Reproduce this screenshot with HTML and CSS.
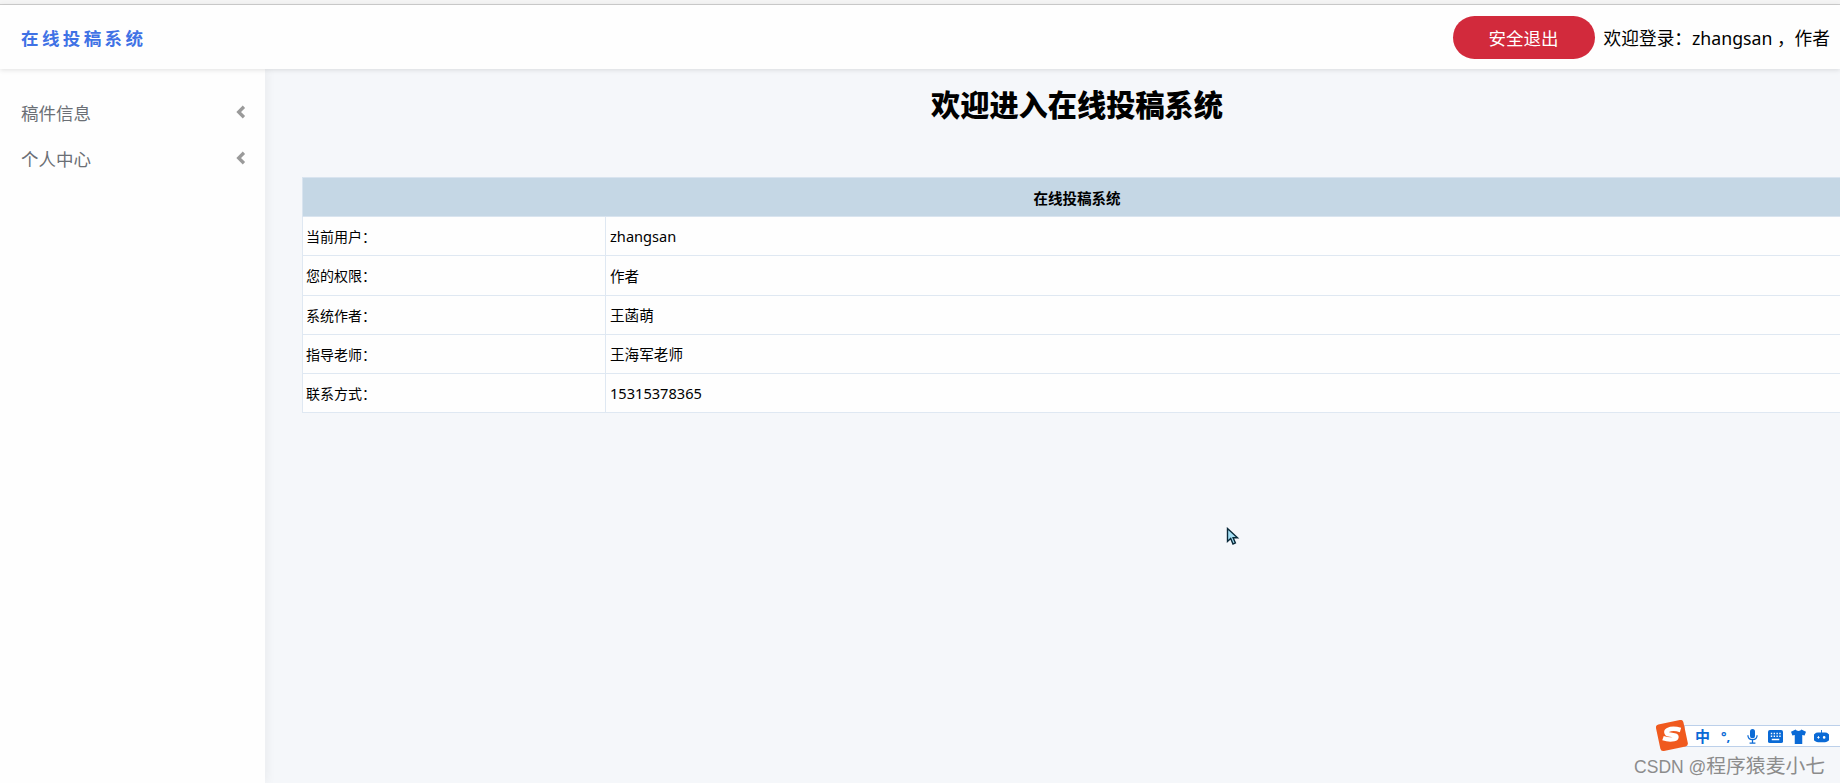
FILE: index.html
```html
<!DOCTYPE html>
<html lang="zh-CN">

<head>
    <meta charset="UTF-8">
    <meta name="viewport" content="width=device-width, initial-scale=1.0">
    <title>在线投稿系统</title>
    <link rel="stylesheet" href="styles.css">
</head>

<body>
    <div class="top-line"></div>
    <header class="topbar">
        <div class="logo">在线投稿系统</div>
        <div class="user-box">
            <button class="btn-logout">安全退出</button>
            <span class="welcome">欢迎登录：zhangsan ，作者</span>
        </div>
    </header>

    <div class="layout">
        <aside class="sidebar">
            <div class="menu-item">
                <span>稿件信息</span>
                <svg class="arrow" viewBox="0 0 10 12"><path d="M7.5 1.5 3 6l4.500 4.500" /></svg>
            </div>
            <div class="menu-item">
                <span>个人中心</span>
                <svg class="arrow" viewBox="0 0 10 12"><path d="M7.5 1.5 3 6l4.500 4.500" /></svg>
            </div>
        </aside>

        <main class="content">
            <h1>欢迎进入在线投稿系统</h1>
            <table class="info-table">
                <colgroup>
                    <col class="col-label">
                    <col>
                </colgroup>
                <tr>
                    <th colspan="2">在线投稿系统</th>
                </tr>
                <tr>
                    <td class="label">当前用户：</td>
                    <td>zhangsan</td>
                </tr>
                <tr>
                    <td class="label">您的权限：</td>
                    <td>作者</td>
                </tr>
                <tr>
                    <td class="label">系统作者：</td>
                    <td>王菡萌</td>
                </tr>
                <tr>
                    <td class="label">指导老师：</td>
                    <td>王海军老师</td>
                </tr>
                <tr>
                    <td class="label">联系方式：</td>
                    <td>15315378365</td>
                </tr>
            </table>
        </main>
    </div>

    <!-- mouse pointer -->
    <svg class="cursor" viewBox="0 0 14 20">
        <path d="M1.500 1.500v13l3.200-3 2.300 5.500 2.400-1-2.300-5.300h4.400z" />
    </svg>

    <!-- input method bar -->
    <div class="ime">
        <svg class="ime-logo" viewBox="0 0 32 32">
            <rect x="2" y="2" width="28" height="27" rx="3" transform="rotate(-12 16 16)" />
            <path d="M24.500 10c-4-1.200-9-1.700-12.500 0-2.500 1.300-2 3.800 1 4.400l5.500 1c2.800.6 2.500 3-.5 3.700-3 .7-7.500.3-11-.9" />
        </svg>
        <div class="ime-bar">
            <span class="ime-zh">中</span>
            <span class="ime-punct">°,</span>
            <svg class="ime-icon" viewBox="0 0 14 18">
                <rect x="4" y="0" width="6" height="11" rx="3" />
                <path class="line" d="M1.500 7.500c0 7 11 7 11 0M7 13v3.500M3.500 17h7" />
            </svg>
            <svg class="ime-icon" viewBox="0 0 16 14">
                <rect x="0" y="0" width="16" height="14" rx="2" />
                <path class="keys" d="M3 3h1.500v1.500H3zM6 3h1.500v1.500H6zM9 3h1.500v1.500H9zM12 3h1.500v1.500H12zM3 6h1.500v1.500H3zM6 6h1.500v1.500H6zM9 6h1.500v1.500H9zM12 6h1.500v1.500H12zM4 9.500h8V11H4z" />
            </svg>
            <svg class="ime-icon" viewBox="0 0 16 16">
                <path d="M5 0.500 0 3l1.500 4L4 6.300V16h8V6.300l2.500.7L16 3 11 .5C10.500 2.500 5.500 2.500 5 .5z" />
            </svg>
            <svg class="ime-icon" viewBox="0 0 17 15">
                <path d="M8 0h1v3h3.500a4.500 4.500 0 0 1 0 11h-8a4.500 4.500 0 0 1 0-11H8z" />
                <path class="keys" d="M3.500 8h3v1h-3zM4.500 7h1v3h-1zM11.500 7a1.500 1.500 0 1 1 0 3 1.500 1.500 0 0 1 0-3z" />
            </svg>
        </div>
    </div>
    <div class="watermark"><span class="wm-latin">CSDN @</span>程序猿麦小七</div>
</body>

</html>
```

FILE: styles.css
```css
* {
    box-sizing: border-box;
}

html,
body {
    height: 100%;
    margin: 0;
    overflow: hidden;
}

body {
    font-family: "Noto Sans", "Noto Sans CJK SC", sans-serif;
    background-color: #f5f7fa;
    color: #000;
}

.top-line {
    height: 5px;
    background-color: #f4f4f4;
    border-bottom: 1px solid #cfcfcf;
}

.topbar {
    position: relative;
    z-index: 2;
    display: flex;
    justify-content: space-between;
    align-items: center;
    height: 64px;
    padding: 0 10px 0 21px;
    background-color: #fefefe;
    box-shadow: 0 1px 5px rgba(0, 0, 0, 0.12);
}

.logo {
    color: #3f72e5;
    font-size: 17.500px;
    font-weight: bold;
    letter-spacing: 3.400px;
}

.user-box {
    display: flex;
    align-items: center;
    gap: 9px;
}

.btn-logout {
    width: 142px;
    height: 43px;
    padding: 0;
    border: none;
    border-radius: 22px;
    background-color: #d22a3c;
    color: #fff;
    font-family: inherit;
    font-size: 17.500px;
}

.welcome {
    font-size: 17.700px;
}

.layout {
    display: flex;
    height: calc(100% - 69px);
}

.sidebar {
    flex: 0 0 265px;
    padding-top: 20px;
    background-color: #fefefe;
    box-shadow: 2px 0 10px rgba(0, 0, 0, 0.05);
}

.menu-item {
    display: flex;
    justify-content: space-between;
    align-items: center;
    height: 46px;
    padding: 0 18px 0 21px;
    color: #6b6f75;
    font-size: 17.500px;
}

.arrow {
    width: 12px;
    height: 14px;
    fill: none;
    stroke: #9a9a9a;
    stroke-width: 2.800;
}

.content {
    flex: 0 0 1624px;
    padding: 0 37px;
}

h1 {
    height: 108px;
    margin: 0;
    padding-top: 16px;
    font-size: 29.200px;
    font-weight: 900;
    line-height: 40px;
    text-align: center;
}

.info-table {
    width: 100%;
    border-collapse: collapse;
    table-layout: fixed;
    font-size: 14.600px;
}

.col-label {
    width: 303px;
}

.info-table th {
    height: 39.200px;
    background-color: #c5d7e5;
    border: 1px solid #d9e4ef;
    font-size: 14.500px;
}

.info-table td {
    height: 39.200px;
    padding: 0 4px;
    background-color: #fefefe;
    border: 1px solid #dfe8f2;
}

.info-table .label {
    padding-left: 3px;
    font-size: 14px;
}

.cursor {
    position: absolute;
    left: 1226px;
    top: 527px;
    width: 14px;
    height: 20px;
    fill: #a5e0f5;
    stroke: #0a2a3a;
    stroke-width: 1.400;
}

.ime {
    position: absolute;
    right: 0;
    top: 720px;
    display: flex;
    align-items: center;
    width: 184px;
}

.ime-logo {
    position: relative;
    z-index: 1;
    flex: 0 0 32px;
    width: 32px;
    height: 32px;
}

.ime-logo rect {
    fill: #f05a1e;
}

.ime-logo path {
    fill: none;
    stroke: #fff;
    stroke-width: 4.500;
}

.ime-bar {
    display: flex;
    flex: 1;
    align-items: center;
    gap: 8px;
    height: 22px;
    margin-left: -4px;
    padding-left: 10px;
    background-color: #fff;
    border: 1px solid #bcd0ea;
    border-right: none;
    color: #0a6ad6;
}

.ime-zh {
    font-size: 15px;
    font-weight: bold;
    line-height: 1;
}

.ime-punct {
    width: 14px;
    margin: 0 2px 0 3px;
    font-size: 13px;
    font-weight: bold;
    line-height: 1;
}

.ime-icon {
    width: 15px;
    height: 15px;
    fill: #0a6ad6;
}

.ime-icon .line {
    fill: none;
    stroke: #0a6ad6;
    stroke-width: 1.500;
}

.ime-icon .keys {
    fill: #fff;
}

.watermark {
    position: absolute;
    right: 15px;
    top: 754px;
    color: #8c8c8c;
    font-family: "Liberation Sans", "Noto Sans CJK SC", sans-serif;
    font-size: 19.800px;
    line-height: 24px;
    white-space: nowrap;
}

.wm-latin {
    font-size: 17.500px;
}
```
